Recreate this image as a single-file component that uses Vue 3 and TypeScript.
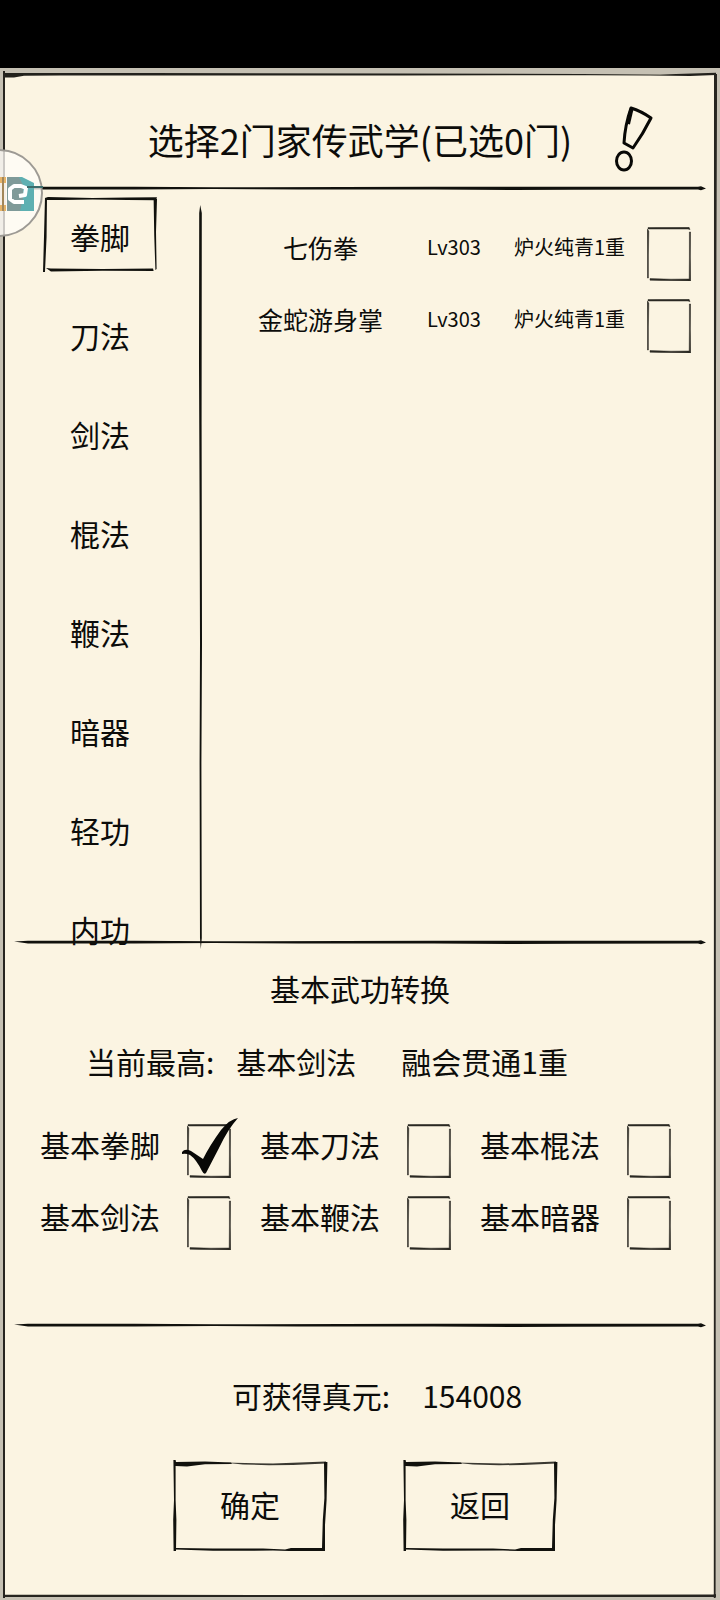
<script setup lang="ts">
import { computed, ref } from 'vue'

interface Skill {
  name: string
  level: string
  mastery: string
  picked: boolean
}

interface Basic {
  name: string
  checked: boolean
}

const tabs: string[] = ['拳脚', '刀法', '剑法', '棍法', '鞭法', '暗器', '轻功', '内功']
const activeTab = ref('拳脚')

const skills = ref<Skill[]>([
  { name: '七伤拳', level: 'Lv303', mastery: '炉火纯青1重', picked: false },
  { name: '金蛇游身掌', level: 'Lv303', mastery: '炉火纯青1重', picked: false },
])

const basics = ref<Basic[]>([
  { name: '基本拳脚', checked: true },
  { name: '基本刀法', checked: false },
  { name: '基本棍法', checked: false },
  { name: '基本剑法', checked: false },
  { name: '基本鞭法', checked: false },
  { name: '基本暗器', checked: false },
])

const pickedCount = computed(() => skills.value.filter((s) => s.picked).length)
</script>

<template>
  <div class="page">
    <!-- Shared ink shapes -->
    <svg class="defs" aria-hidden="true">
      <symbol id="ink-rule" viewBox="0 0 692 8" preserveAspectRatio="none">
        <path d="M0 3.4 L14 2.7 L120 2.8 L200 3.2 L330 3 L420 2.8 L540 2.8 L684 2.8 L687 2.2 L692 4.4 L687 6.2 L684 5.6 L560 5.8 L500 6 L420 5.6 L285 5.4 L240 5.2 L200 5 L120 5.4 L14 5.5 Z" fill="#11110d" />
      </symbol>
      <symbol id="ink-vertical" viewBox="0 0 8 746" preserveAspectRatio="none">
        <path d="M3.2 0 L4.8 8 L4.6 220 L5 440 L4.4 560 L4.8 735 L3.8 746 L3 735 L2.6 560 L3 440 L2.6 300 L2 160 L2.2 8 Z" fill="#11110d" />
      </symbol>
      <symbol id="ink-tab" viewBox="0 0 115 75" preserveAspectRatio="none">
        <path d="M2 1 L5 0 L50 1 L85 .4 L115 .2 L114 3.2 L85 3 L50 2.6 L20 3 L4 3 L3.6 40 L2 75 L0 75 L1 40 Z" fill="#11110d" />
        <path d="M111.6 2 L115 2 L114 35 L114.6 72 L113.4 73 L112.2 38 Z M3 71 L8 71.6 L60 72 L111 71.6 L111.6 74 L60 73.8 L8 74.4 Z" fill="#11110d" />
      </symbol>
      <symbol id="ink-button" viewBox="0 0 155 91" preserveAspectRatio="none">
        <path d="M.4 0 L2.6 0 L3 2 L32 1.6 L58 2.6 L59 4 L32 4.2 L14 6.4 L2.6 6 L2.6 40 L3.4 60 L3 91 L.6 91 L.2 60 L1 40 Z" fill="#11110d" />
        <path d="M50 2.4 L100 3.6 L153 1.6 L153 3.4 L120 5 L96 5.2 L70 4.4 Z" fill="#3a3831" />
        <path d="M151 2 L154.4 2 L153.6 40 L152 65 L152 91 L116 91 L100 90.6 L40 90.8 L3 89.6 L3 88 L40 88.6 L90 88.6 L112 89.4 L118 88 L149 88 L149.8 60 L151.4 38 Z" fill="#11110d" />
      </symbol>
      <symbol id="ink-check" viewBox="0 0 44 54" preserveAspectRatio="none">
        <path d="M1 .6 L42 .2 L43 2.6 L41 2 L1 2 Z M.2 2 L1.8 4 L1.4 28 L1.4 51 L.4 51 L.4 28 Z M42.4 5 L43.6 5 L43.4 30 L43.8 54 L24 53.8 L3 53.2 L3 51.6 L24 52.2 L42.2 52 L42.4 30 Z" fill="#2b2923" stroke="#2b2923" stroke-width=".5" />
      </symbol>
      <symbol id="ink-tick" viewBox="0 0 56 58">
        <path d="M0 34 Q3 30 9 33 L21 41 Q28 27 39 12 Q48 1 56 0 Q46 11 37 30 L24 55 Q22 57 20 53 Q14 41 8 37 Q4 35 0 36 Z" fill="#080806" />
      </symbol>
    </svg>

    <div class="status-bar"></div>

    <main class="game">
      <svg class="frame" viewBox="0 0 720 1532" preserveAspectRatio="none" aria-hidden="true">
        <path d="M0 0 H720 V1532 H0 Z M4 6 V1528 H715 V6 Z" fill="#c5c0b3" fill-rule="evenodd" />
        <path d="M3 5 L28 5 L150 5 L400 5.4 L580 6 L660 6.4 L716 4.8 L716 7 L690 8 L650 7.6 L590 7.2 L400 7.6 L60 7.4 L24 7.8 L14 9.4 L4 9.4 Z" fill="#22211c" />
        <path d="M3 3 H5 V1530 H3 Z M714 6 H717 V34 L716 300 L715.6 1530 H713.8 Z M3 1526.4 L300 1527 L716 1526.4 L716 1529 L3 1529 Z" fill="#26241f" />
      </svg>

      <header class="header">
        <h1 class="title">选择2门家传武学(已选{{ pickedCount }}门)</h1>
        <button class="hint" type="button" aria-label="说明">
          <svg width="40" height="68" viewBox="0 0 40 68" aria-hidden="true">
            <path d="M17 3 Q27 6 37 13 Q29 29 19 43 L10 38 Q11 20 17 3 Z" fill="none" stroke="#080806" stroke-width="3" stroke-linejoin="round" />
            <path d="M17.5 4 L14 19" stroke="#080806" stroke-width="4" />
            <ellipse cx="10" cy="56" rx="7.5" ry="9" fill="none" stroke="#080806" stroke-width="3" />
          </svg>
        </button>
      </header>
      <svg class="rule" aria-hidden="true"><use href="#ink-rule" /></svg>

      <section class="browser">
        <nav class="tabs">
          <button
            v-for="tab in tabs"
            :key="tab"
            class="tab"
            type="button"
            :aria-pressed="tab === activeTab"
            @click="activeTab = tab"
          >
            <svg v-if="tab === activeTab" class="outline" aria-hidden="true"><use href="#ink-tab" /></svg>
            {{ tab }}
          </button>
        </nav>
        <svg class="vertical" aria-hidden="true"><use href="#ink-vertical" /></svg>
        <div class="skills">
          <label v-for="skill in skills" :key="skill.name" class="skill">
            <span class="skill-name">{{ skill.name }}</span>
            <span class="skill-level">{{ skill.level }}</span>
            <span class="skill-mastery">{{ skill.mastery }}</span>
            <span class="check">
              <input v-model="skill.picked" type="checkbox" />
              <svg class="outline" aria-hidden="true"><use href="#ink-check" /></svg>
              <svg v-if="skill.picked" class="tick" aria-hidden="true"><use href="#ink-tick" /></svg>
            </span>
          </label>
        </div>
      </section>
      <svg class="rule" aria-hidden="true"><use href="#ink-rule" /></svg>

      <section class="convert">
        <h2 class="subtitle">基本武功转换</h2>
        <p class="best">
          <span>当前最高:</span>
          <span class="best-name">基本剑法</span>
          <span>融会贯通1重</span>
        </p>
        <div class="basics">
          <label v-for="basic in basics" :key="basic.name" class="basic">
            <span>{{ basic.name }}</span>
            <span class="check">
              <input v-model="basic.checked" type="checkbox" />
              <svg class="outline" aria-hidden="true"><use href="#ink-check" /></svg>
              <svg v-if="basic.checked" class="tick" aria-hidden="true"><use href="#ink-tick" /></svg>
            </span>
          </label>
        </div>
      </section>
      <svg class="rule" aria-hidden="true"><use href="#ink-rule" /></svg>

      <footer class="footer">
        <p class="reward"><span>可获得真元:</span><span>154008</span></p>
        <div class="actions">
          <button class="action" type="button">
            <svg class="outline" aria-hidden="true"><use href="#ink-button" /></svg>确定
          </button>
          <button class="action" type="button">
            <svg class="outline" aria-hidden="true"><use href="#ink-button" /></svg>返回
          </button>
        </div>
      </footer>
    </main>

    <button class="float-ball" type="button" aria-label="悬浮球">
      <svg width="88" height="88" viewBox="0 0 88 88" aria-hidden="true">
        <circle cx="44" cy="44" r="43" fill="#fffdf8" fill-opacity=".76" stroke="#9d9a94" stroke-width="2" />
        <path d="M24 28 H51 V62 H24 Z" fill="#e6b367" />
        <path d="M30 34 H51 V56 H30 Z" fill="#f5efe6" />
        <path d="M48 28 V62" stroke="#a38759" stroke-width="2" />
        <path d="M52 28 H67 L79 34 V62 H52 Z" fill="#5eb0b2" />
        <path d="M52 28 H64 L68 36 V50 L65 62 H52 Z" fill="#7f9a99" />
        <path d="M64 47 L70 46 L71 39 L66 37 H59 L55 40 V50 L59 53 H69" fill="none" stroke="#fff" stroke-width="4" stroke-linejoin="round" />
        <path d="M72 38 H88" stroke="#3c6c6b" stroke-width="2" />
      </svg>
    </button>
  </div>
</template>

<style>
body {
  margin: 0;
  background: #fbf4e2;
}
</style>

<style scoped>
.page {
  position: relative;
  display: flex;
  flex-direction: column;
  min-height: 100vh;
  overflow: hidden;
  color: #0c0c0a;
  font-family: 'Noto Sans CJK SC', 'Noto Sans', sans-serif;
  font-size: 30px;
  line-height: 40px;
}

.page * {
  box-sizing: border-box;
}

.defs {
  position: absolute;
  width: 0;
  height: 0;
}

button {
  padding: 0;
  border: 0;
  background: none;
  color: inherit;
  font: inherit;
  cursor: pointer;
}

h1,
h2,
p {
  margin: 0;
  font-weight: 400;
}

.status-bar {
  height: 68px;
  background: #000;
}

.game {
  position: relative;
  display: flex;
  flex: 1;
  flex-direction: column;
  background: #fbf4e2;
}

.frame,
.outline {
  position: absolute;
  inset: 0;
  width: 100%;
  height: 100%;
  pointer-events: none;
}

.header {
  position: relative;
  display: grid;
  grid-template-columns: 1fr auto 1fr;
  align-items: center;
  height: 116px;
  padding-top: 26px;
}

.title {
  grid-column: 2;
  font-size: 36px;
  white-space: nowrap;
}

.hint {
  justify-self: end;
  height: 68px;
  margin-right: 66px;
}

.hint svg,
.float-ball svg {
  display: block;
}

.rule {
  position: relative;
  flex: none;
  width: auto;
  height: 8px;
  margin: 0 14px;
}

.browser {
  position: relative;
  display: flex;
  margin-bottom: -27px;
  padding: 5px 0 0 43px;
}

.tabs {
  display: flex;
  flex-direction: column;
  gap: 24px;
  width: 114px;
}

.tab {
  position: relative;
  height: 75px;
  padding-top: 2px;
}

.vertical {
  flex: none;
  width: 8px;
  height: 744px;
  margin: 8px 0 0 40px;
}

.skills {
  display: flex;
  flex: 1;
  flex-direction: column;
  gap: 18px;
  padding: 30px 29px 0 27px;
}

.skill {
  display: grid;
  grid-template-columns: 1fr auto auto 44px;
  align-items: start;
  white-space: nowrap;
}

.skill-name {
  padding-right: 18px;
  font-size: 25px;
  text-align: center;
}

.skill-level {
  margin-right: 33px;
  font-size: 20px;
}

.skill-mastery {
  margin-right: 22px;
  font-size: 20px;
}

.check {
  position: relative;
  display: block;
  width: 44px;
  height: 54px;
}

.check input {
  display: block;
  width: 100%;
  height: 100%;
  margin: 0;
  appearance: none;
  cursor: pointer;
}

.tick {
  position: absolute;
  top: -6px;
  left: -5px;
  width: 56px;
  height: 58px;
  pointer-events: none;
}

.convert {
  position: relative;
  padding: 22px 40px 71px;
}

.subtitle {
  font-size: 30px;
  text-align: center;
}

.best {
  display: flex;
  margin: 33px 0 43px;
  padding-left: 46px;
}

.best-name {
  margin: 0 45px 0 22px;
}

.basics {
  display: grid;
  grid-template-columns: repeat(3, 1fr);
  gap: 18px 20px;
}

.basic {
  display: flex;
  gap: 27px;
  align-items: flex-start;
  white-space: nowrap;
}

.footer {
  position: relative;
  display: flex;
  flex-direction: column;
  gap: 45px;
  padding: 46px 0 49px;
}

.reward {
  display: flex;
  gap: 32px;
  justify-content: center;
  padding-left: 34px;
}

.actions {
  display: flex;
  gap: 75px;
  justify-content: center;
  padding-left: 10px;
}

.action {
  position: relative;
  height: 91px;
  width: 155px;
  padding-bottom: 4px;
}

.float-ball {
  position: absolute;
  top: 149px;
  left: -45px;
}
</style>
